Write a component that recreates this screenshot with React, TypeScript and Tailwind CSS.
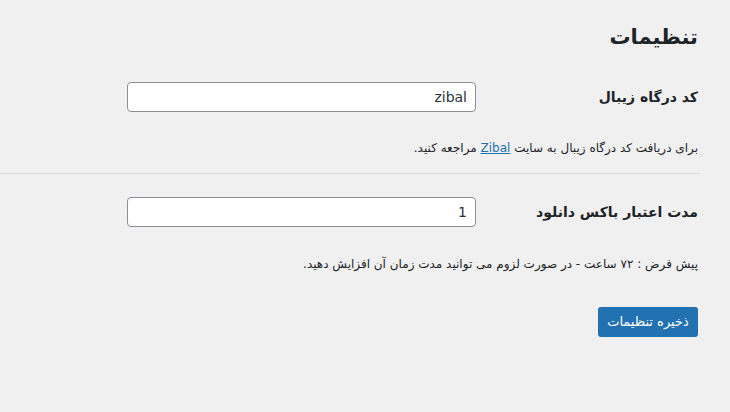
export default function App() {
  const font = { fontFamily: '"DejaVu Sans", "Liberation Sans", sans-serif' };
  return (
    <div
      dir="rtl"
      className="min-h-[412px] w-[730px] bg-[#f0f0f1] pr-[32px] pt-[22px] text-[#1d2327]"
      style={font}
    >
      <h1 className="text-[21px] font-bold leading-[30px]">تنظیمات</h1>

      <div className="mt-[30px] flex items-center">
        <label className="w-[222px] text-[14px] font-bold">کد درگاه زیبال</label>
        <input
          defaultValue="zibal"
          className="h-[30px] w-[349px] rounded-[4px] border border-[#8c8f94] bg-white px-[8px] text-[14px] text-[#2c3338] outline-none"
        />
      </div>
      <p className="mt-[26px] text-[12px] leading-[20px]">
        برای دریافت کد درگاه زیبال به سایت{" "}
        <a href="#" className="text-[#2271b1] underline">Zibal</a> مراجعه کنید.
      </p>

      <hr className="ml-[-2px] mr-[-2px] mt-[15px] border-t border-[#dcdcde]" />

      <div className="mt-[23px] flex items-center">
        <label className="w-[222px] text-[14px] font-bold">مدت اعتبار باکس دانلود</label>
        <input
          defaultValue="1"
          className="h-[30px] w-[349px] rounded-[4px] border border-[#8c8f94] bg-white px-[8px] text-[14px] text-[#2c3338] outline-none"
        />
      </div>
      <p className="mt-[27px] text-[12px] leading-[20px]">
        پیش فرض : ۷۲ ساعت - در صورت لزوم می توانید مدت زمان آن افزایش دهید.
      </p>

      <button className="mt-[33px] h-[30px] w-[100px] rounded-[3px] bg-[#2271b1] text-[13px] text-white">
        ذخیره تنظیمات
      </button>
    </div>
  );
}
